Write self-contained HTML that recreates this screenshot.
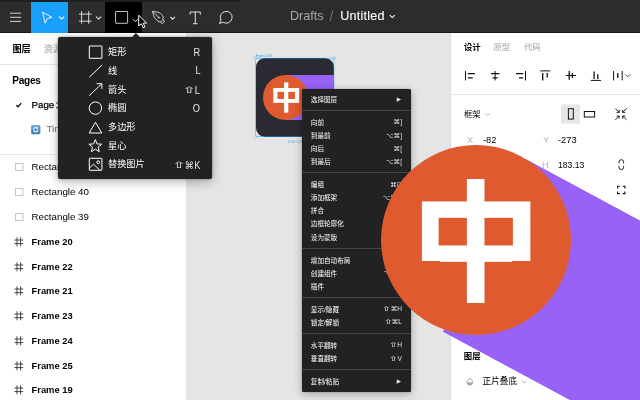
<!DOCTYPE html>
<html lang="zh-CN">
<head>
<meta charset="utf-8">
<title>Figma CN</title>
<style>
*{box-sizing:border-box;margin:0;padding:0}
html,body{width:640px;height:400px;overflow:hidden;background:#e5e5e5}
body{position:relative;font-family:"Liberation Sans","Noto Sans CJK SC",sans-serif;color:#000;-webkit-font-smoothing:antialiased}
.abs{position:absolute}
.t{position:absolute;white-space:nowrap;line-height:1}
/* toolbar */
#toolbar{left:0;top:0;width:640px;height:32.6px;background:#2c2c2c;border-bottom:1px solid #171717}
#topstrip{left:0;top:0;width:240px;height:1.6px;background:#1f1f1f}
#btn-move{left:31px;top:1.6px;width:37px;height:31px;background:#18a0fb}
#btn-rect{left:105.3px;top:1.6px;width:37px;height:31px;background:#000}
/* panels */
#left{left:0;top:32.6px;width:186px;height:367.4px;background:#fff}
#right{left:450px;top:32.6px;width:190px;height:367.4px;background:#fff;border-left:1px solid #dcdcdc}
.hline{position:absolute;height:1px;background:#e5e5e5}
.cjk{font-family:"Liberation Sans","Noto Sans CJK SC",sans-serif}
.b{font-weight:bold}
.grey{color:#b3b3b3}
/* layer rows */
.row{position:absolute;left:0;width:186px;height:24px}
.row .nm{position:absolute;left:31.5px;top:0;height:24px;line-height:24px;font-size:9.75px;white-space:nowrap}
.row.fr .nm{font-weight:bold;font-size:9.4px}
/* dropdown */
#dd{left:58px;top:37px;width:154px;height:142.3px;background:#222;border-radius:2px;box-shadow:0 3px 11px rgba(0,0,0,.28),0 0 3px rgba(0,0,0,.35)}
.ddi{position:absolute;left:0;width:154px;height:18.67px}
.ddi .lb{position:absolute;left:50px;top:0.8px;height:18.67px;line-height:18.67px;font-size:9.2px;color:#fff;white-space:nowrap}
.ddi .sc{position:absolute;right:11.8px;top:1.1px;height:18.67px;line-height:18.67px;font-size:10px;transform:scaleX(.92);transform-origin:100% 50%;letter-spacing:.45px;margin-right:-.45px;color:#e8e8e8;white-space:nowrap;font-family:"Liberation Sans","DejaVu Sans",sans-serif}
/* context menu */
#cm{left:302px;top:89px;width:109px;height:302.5px;background:#222;border-radius:1.5px;box-shadow:0 2px 8px rgba(0,0,0,.30),0 0 1px rgba(0,0,0,.6)}
.cmi{position:absolute;left:0;width:109px;height:13.1px}
.cmi .lb{position:absolute;left:8.8px;top:0;height:13.1px;line-height:13.1px;font-size:6.6px;color:#fff;white-space:nowrap}
.cmi .sc{position:absolute;right:9px;top:-0.4px;height:13.1px;line-height:13.1px;font-size:6.6px;color:#e0e0e0;white-space:nowrap;font-family:"Liberation Sans","DejaVu Sans",sans-serif}
.sh{display:inline-block;font-size:1.1em;transform:scale(1.7,0.8);margin:0 1.1px 0 2.5px}
.cmi .sh{font-size:1.2em;transform:scale(1.45,0.8);margin:0 0.6px 0 1.2px}
.num{height:13px;line-height:13px;font-size:9.8px;transform:scaleX(.95);transform-origin:0 50%}
.cms{position:absolute;left:0;width:109px;height:1px;background:#444}
</style>
</head>
<body>
<div id="wrap" style="position:absolute;left:0;top:0;width:640px;height:400px;will-change:transform">
<!-- TOOLBAR -->
<div id="toolbar" class="abs"></div>
<div id="topstrip" class="abs"></div>
<div id="btn-move" class="abs"></div>
<div id="btn-rect" class="abs"></div>
<svg class="abs" style="left:0;top:0" width="640" height="33" viewBox="0 0 640 33" fill="none" stroke="#fff" stroke-width="1">
  <!-- hamburger -->
  <path d="M10 13.2H21M10 17.3H21M10 21.4H21" stroke="#d4d4d4" stroke-width="1"/>
  <!-- move arrow -->
  <path d="M42.6 12.1L52 17.4L47.2 18.6L45.2 23.2Z" stroke-linejoin="round" stroke-width="0.9"/>
  <path d="M59 16.6L61.6 19.1L64.2 16.6" stroke-width="1.1"/>
  <!-- frame -->
  <path d="M81.6 11.1V23.8M88.7 11.1V23.8M79 14.1H91.5M79 21.2H91.5" stroke="#e0e0e0" stroke-width="0.95"/>
  <path d="M96 16.6L98.6 19.1L101.2 16.6" stroke="#e6e6e6" stroke-width="1.1"/>
  <!-- rectangle -->
  <rect x="115.6" y="11.5" width="12" height="11.8" rx="0.4" stroke="#d8d8d8" stroke-width="0.9"/>
  <path d="M133.1 19.3L135.4 21.7L137.7 19.3" stroke="#e6e6e6" stroke-width="1"/>
  <!-- pen -->
  <path d="M152.7 11.4C157.4 11.6 161.9 13 163.2 17L162.9 19.7L160.5 22.2C156.6 21.1 153.2 17.4 152.7 11.4ZM162.9 19.7L164.7 21.4L162.3 23.6L160.5 22.2M152.7 11.4L158.2 17" stroke="#e0e0e0" stroke-linejoin="round" stroke-width="0.9"/>
  <circle cx="158.9" cy="17.6" r="0.9" fill="#e0e0e0" stroke="none"/>
  <path d="M170.3 16.8L172.6 19.1L174.9 16.8" stroke="#e6e6e6" stroke-width="1.1"/>
  <!-- text T -->
  <path d="M190.2 14.6V12H200.3V14.6M195.25 12V23.7M193 23.7H197.5" stroke="#e6e6e6"/>
  <!-- comment -->
  <path d="M219.4 23.4L221 20A5.9 5.9 0 1 1 223.3 22.4Z" stroke="#e0e0e0" stroke-linejoin="round"/>
  <!-- title chevron -->
  <path d="M389.8 15.2L392.3 17.6L394.8 15.2" stroke="#fff" stroke-width="1.1"/>
  <!-- mouse cursor -->
  <path d="M138.7 15.2V26L141.3 23.7L143.1 27.7L144.9 26.9L143.1 23.1H146.6Z" fill="#000" stroke="#fff" stroke-width="1" stroke-linejoin="round"/>
</svg>
<div class="t" style="left:290px;top:9px;font-size:12.6px;line-height:14px;color:#a6a6a6">Drafts</div>
<div class="t" style="left:329.5px;top:8px;font-size:14px;line-height:16px;color:#6e6e6e">/</div>
<div class="t" style="left:340.3px;top:9px;font-size:12.6px;line-height:14px;color:#fff;letter-spacing:0.2px;-webkit-text-stroke:0.08px #fff">Untitled</div>

<!-- LEFT PANEL -->
<div id="left" class="abs"></div>
<div class="t b" style="left:12.4px;top:42.6px;height:13px;line-height:13px;font-size:9.2px">图层</div>
<div class="t grey" style="left:43.7px;top:42.6px;height:13px;line-height:13px;font-size:9.2px;font-weight:500">资源</div>
<div class="hline" style="left:0;top:64px;width:186px"></div>
<div class="t b" style="left:12.3px;top:74.1px;height:14px;line-height:14px;font-size:10.1px;letter-spacing:-0.3px">Pages</div>
<svg class="abs" style="left:14px;top:100px" width="12" height="10" viewBox="0 0 12 10" fill="none"><path d="M2.4 5.3L4 6.8L7.2 3.2" stroke="#000" stroke-width="1.25"/></svg>
<div class="t" style="left:31.5px;top:98px;height:14px;line-height:14px;font-size:9.75px;word-spacing:-1.3px;-webkit-text-stroke:0.25px #000">Page 1</div>
<svg class="abs" style="left:31px;top:125px" width="10" height="10" viewBox="0 0 10 10" fill="none">
  <defs><linearGradient id="tg" x1="0" y1="0" x2="0" y2="1"><stop offset="0" stop-color="#72ace0"/><stop offset="1" stop-color="#3f78b6"/></linearGradient></defs>
  <rect x="0.3" y="0.3" width="8.8" height="8.8" rx="1.5" fill="url(#tg)" stroke="#4a7db4" stroke-width="0.5"/>
  <path d="M2.5 4.2A2.3 2.3 0 0 1 6.7 3.6M6.9 5.2A2.3 2.3 0 0 1 2.7 5.8" stroke="#fff" stroke-width="1.1"/>
  <path d="M6 2.6L7.3 3.9L5.6 4.3ZM3.4 6.8L2.1 5.5L3.8 5.1Z" fill="#fff"/>
</svg>
<div class="t" style="left:46.4px;top:122.2px;height:14px;line-height:14px;font-size:9.9px;color:#707070">Timeline</div>
<div class="hline" style="left:0;top:154px;width:186px"></div>
<!-- layer rows: pitch 24.78 -->
<div class="row" style="top:155.3px"><svg class="abs" style="left:14.5px;top:7.8px" width="9" height="9" fill="none"><rect x=".5" y=".5" width="7.4" height="7" stroke="#c4c4c4"/></svg><span class="nm">Rectangle 41</span></div>
<div class="row" style="top:180.1px"><svg class="abs" style="left:14.5px;top:7.8px" width="9" height="9" fill="none"><rect x=".5" y=".5" width="7.4" height="7" stroke="#c4c4c4"/></svg><span class="nm">Rectangle 40</span></div>
<div class="row" style="top:204.9px"><svg class="abs" style="left:14.5px;top:7.8px" width="9" height="9" fill="none"><rect x=".5" y=".5" width="7.4" height="7" stroke="#c4c4c4"/></svg><span class="nm">Rectangle 39</span></div>
<div class="row fr" style="top:229.7px"><svg class="abs" style="left:14px;top:7.1px" width="10" height="10" fill="none" stroke="#333" stroke-width="0.9"><path d="M3 .3V9.3M6.6 .3V9.3M.4 3H9.2M.4 6.6H9.2"/></svg><span class="nm">Frame 20</span></div>
<div class="row fr" style="top:254.5px"><svg class="abs" style="left:14px;top:7.1px" width="10" height="10" fill="none" stroke="#333" stroke-width="0.9"><path d="M3 .3V9.3M6.6 .3V9.3M.4 3H9.2M.4 6.6H9.2"/></svg><span class="nm">Frame 22</span></div>
<div class="row fr" style="top:279.3px"><svg class="abs" style="left:14px;top:7.1px" width="10" height="10" fill="none" stroke="#333" stroke-width="0.9"><path d="M3 .3V9.3M6.6 .3V9.3M.4 3H9.2M.4 6.6H9.2"/></svg><span class="nm">Frame 21</span></div>
<div class="row fr" style="top:304.0px"><svg class="abs" style="left:14px;top:7.1px" width="10" height="10" fill="none" stroke="#333" stroke-width="0.9"><path d="M3 .3V9.3M6.6 .3V9.3M.4 3H9.2M.4 6.6H9.2"/></svg><span class="nm">Frame 23</span></div>
<div class="row fr" style="top:328.8px"><svg class="abs" style="left:14px;top:7.1px" width="10" height="10" fill="none" stroke="#333" stroke-width="0.9"><path d="M3 .3V9.3M6.6 .3V9.3M.4 3H9.2M.4 6.6H9.2"/></svg><span class="nm">Frame 24</span></div>
<div class="row fr" style="top:353.6px"><svg class="abs" style="left:14px;top:7.1px" width="10" height="10" fill="none" stroke="#333" stroke-width="0.9"><path d="M3 .3V9.3M6.6 .3V9.3M.4 3H9.2M.4 6.6H9.2"/></svg><span class="nm">Frame 25</span></div>
<div class="row fr" style="top:378.4px"><svg class="abs" style="left:14px;top:7.1px" width="10" height="10" fill="none" stroke="#333" stroke-width="0.9"><path d="M3 .3V9.3M6.6 .3V9.3M.4 3H9.2M.4 6.6H9.2"/></svg><span class="nm">Frame 19</span></div>

<!-- CANVAS: small icon -->
<div class="abs" id="sicon" style="left:255.5px;top:58px;width:78.5px;height:78.5px;border-radius:9px;background:#2a2a33;overflow:hidden">
  <div class="abs" style="left:30px;top:16.7px;width:50px;height:45.2px;background:#9762f5"></div>
  <div class="abs" style="left:7.5px;top:16.7px;width:45.2px;height:45.2px;border-radius:50%;background:#e05a30"></div>
  <div class="t" id="szh" style="left:8px;top:15.4px;width:45.2px;height:45.2px;line-height:45.2px;text-align:center;color:#fff;font-family:'Noto Sans CJK SC',sans-serif;font-weight:700;font-size:30.9px;-webkit-text-stroke:0.24px #fff">中</div>
  <div class="abs" style="left:16px;top:45.4px;width:6px;height:2.4px;background:#e05a30"></div>
  <div class="abs" style="left:38.5px;top:45.4px;width:6px;height:2.4px;background:#e05a30"></div>
</div>
<svg class="abs" style="left:250px;top:50px" width="92" height="96" viewBox="250 50 92 96" fill="none">
  <rect x="255.7" y="58.2" width="78.2" height="78.2" stroke="#18a0fb" stroke-width="0.6" opacity="0.8"/>
  <rect x="254.4" y="56.9" width="2.2" height="2.2" rx="0.9" fill="#fff" stroke="#3aa5f5" stroke-width="0.6"/>
  <rect x="333.1" y="56.9" width="2.2" height="2.2" rx="0.9" fill="#fff" stroke="#3aa5f5" stroke-width="0.6"/>
  <rect x="254.4" y="135.5" width="2.2" height="2.2" rx="0.9" fill="#fff" stroke="#3aa5f5" stroke-width="0.6"/>
  <rect x="333.1" y="135.5" width="2.2" height="2.2" rx="0.9" fill="#fff" stroke="#3aa5f5" stroke-width="0.6"/>
  <text x="255.7" y="57" fill="#4aa8f0" style="font-family:'Liberation Sans',sans-serif;font-size:3.9px">FigmaCN</text>
  <text x="287.6" y="143.4" fill="#4aa8f0" style="font-family:'Liberation Sans',sans-serif;font-size:3.9px">128×128</text>
</svg>

<!-- RIGHT PANEL -->
<div id="right" class="abs"></div>
<div class="t b" style="left:464px;top:40.8px;height:13px;line-height:13px;font-size:8.4px">设计</div>
<div class="t grey" style="left:493.4px;top:40.8px;height:13px;line-height:13px;font-size:8.4px;font-weight:500">原型</div>
<div class="t grey" style="left:524px;top:40.8px;height:13px;line-height:13px;font-size:8.4px;font-weight:500">代码</div>
<svg class="abs" style="left:451px;top:33px" width="189" height="367" viewBox="451 33 189 367" fill="none" stroke="#111" stroke-width="1">
  <!-- align left -->
  <path d="M465.5 71V80.4"/><path d="M467.8 73.6H474.9M467.8 77.9H472.8" stroke-width="1.3"/>
  <!-- align h center -->
  <path d="M495.1 71V80.4"/><path d="M491 73.6H499.4M492.6 77.9H497.6" stroke-width="1.3"/>
  <!-- align right -->
  <path d="M525.5 71V80.4"/><path d="M516 73.6H523.2M519 77.9H523.2" stroke-width="1.3"/>
  <!-- align top -->
  <path d="M540.2 70.9H550.2"/><path d="M542.7 73V80.4M547.2 73V77.6" stroke-width="1.3"/>
  <!-- align v center -->
  <path d="M565.8 75.5H576"/><path d="M569.2 71.1V79.8M572.4 73V78" stroke-width="1.3"/>
  <!-- align bottom -->
  <path d="M590.8 80.4H601"/><path d="M594.1 71.4V79M597.8 74.3V79" stroke-width="1.3"/>
  <!-- distribute -->
  <path d="M613.6 71V80.4M622.2 71V80.4"/><path d="M617.8 73V78" stroke-width="1.3"/>
  <path d="M625.2 74.4L627.6 76.8L630 74.4" stroke="#333" stroke-width="0.9"/>
  <!-- frame chevron -->
  <path d="M485.4 113.2L487.8 115.6L490.2 113.2" stroke="#a0a0a0" stroke-width="0.8"/>
  <!-- portrait / landscape -->
  <rect x="561" y="104.4" width="18.8" height="19.2" fill="#e6e6e6" stroke="none"/>
  <rect x="568.4" y="108.7" width="4.9" height="10.4"/>
  <rect x="584.3" y="111.5" width="10.3" height="5.5"/>
  <!-- collapse -->
  <path d="M615.3 108.5L619.2 112.4M619.2 109.8V112.4H616.6M626.6 108.5L622.7 112.4M622.7 109.8V112.4H625.3M615.3 119.9L619.2 116M619.2 118.6V116H616.6M626.6 119.9L622.7 116M622.7 118.6V116H625.3" stroke-width="0.9"/>
  <!-- link -->
  <path d="M619 163.4V162A2.3 2.3 0 0 1 623.6 162V163.4M619 165.9V167.3A2.3 2.3 0 0 0 623.6 167.3V165.9" stroke-width="0.9"/>
  <!-- corners -->
  <path d="M617.6 188.4V186.2H619.8M622.7 186.2H624.9V188.4M624.9 191.4V193.6H622.7M619.8 193.6H617.6V191.4" stroke-width="1.1"/>
  <!-- blend icon -->
  <path d="M469.8 378.1C468.2 379.8 467 381 467 382.3A2.8 2.8 0 0 0 472.6 382.3C472.6 381 471.4 379.8 469.8 378.1Z" stroke="#8c8c8c" stroke-width="0.8"/>
  <path d="M467 382.2A2.8 2.8 0 0 0 472.6 382.2Z" fill="#a8a8a8" stroke="none"/>
  <path d="M521.9 380.7L524.2 382.8L526.5 380.7" stroke="#a0a0a0" stroke-width="0.8"/>
</svg>
<div class="hline" style="left:451px;top:94px;width:189px"></div>
<div class="t" style="left:464px;top:107.7px;height:13px;line-height:13px;font-size:8.4px">框架</div>
<div class="t grey num" style="left:466.6px;top:132.9px">X</div>
<div class="t num" style="left:482.6px;top:132.9px">-82</div>
<div class="t grey num" style="left:542.8px;top:132.9px">Y</div>
<div class="t num" style="left:558.3px;top:132.9px">-273</div>
<div class="t grey num" style="left:466px;top:158.4px">W</div>
<div class="t num" style="left:482.6px;top:158.4px;transform:scaleX(.875)">183.13</div>
<div class="t grey num" style="left:542.4px;top:158.4px">H</div>
<div class="t num" style="left:558.2px;top:158.4px;transform:scaleX(.875)">183.13</div>
<div class="t b" style="left:463.8px;top:349.8px;height:13px;line-height:13px;font-size:8.4px">图层</div>
<div class="t" style="left:482.6px;top:375px;height:13px;line-height:13px;font-size:8.6px">正片叠底</div>

<!-- DROPDOWN -->
<div id="dd" class="abs">
  <div class="ddi" style="top:5.7px"><span class="lb">矩形</span><span class="sc">R</span></div>
  <div class="ddi" style="top:24.4px"><span class="lb">线</span><span class="sc">L</span></div>
  <div class="ddi" style="top:43.1px"><span class="lb">箭头</span><span class="sc"><span class="sh">⇧</span>L</span></div>
  <div class="ddi" style="top:61.7px"><span class="lb">椭圆</span><span class="sc">O</span></div>
  <div class="ddi" style="top:80.4px"><span class="lb">多边形</span></div>
  <div class="ddi" style="top:99.1px"><span class="lb">星心</span></div>
  <div class="ddi" style="top:117.7px"><span class="lb">替换图片</span><span class="sc"><span class="sh">⇧</span>⌘K</span></div>
</div>
<svg class="abs" style="left:58px;top:32px" width="155" height="147" viewBox="58 32 155 147" fill="none" stroke="#fff" stroke-width="1">
  <path d="M131.9 37.2L135.9 33.1L139.9 37.2Z" fill="#222" stroke="none"/>
  <rect x="89.3" y="46" width="12.6" height="12.3" rx="0.2"/>
  <path d="M89.2 77.3L102 65"/>
  <path d="M89.2 95.6L101.8 83.8M96.6 83.7H101.9V89"/>
  <circle cx="95.4" cy="108.1" r="6.2"/>
  <path d="M95.5 122.3L101.8 133H89.2Z" stroke-linejoin="miter"/>
  <path d="M95.3 139.6L97 143.9L101.7 144.2L98.1 147.2L99.3 151.7L95.3 149.2L91.3 151.7L92.5 147.2L88.9 144.2L93.6 143.9Z" stroke-linejoin="miter"/>
  <rect x="89.3" y="158.3" width="12.6" height="12" rx="0.4"/>
  <path d="M89.5 168L93.4 164.2L100 170.2"/>
  <circle cx="98.2" cy="162.2" r="1.4"/>
</svg>

<!-- CONTEXT MENU -->
<div id="cm" class="abs">
  <div class="cmi" style="top:3.85px"><span class="lb">选择图层</span><span class="sc" style="right:10px;top:0.1px;font-size:5.6px">▶&#xFE0E;</span></div>
  <div class="cms" style="top:20.8px"></div>
  <div class="cmi" style="top:26.85px"><span class="lb">向前</span><span class="sc">⌘]</span></div>
  <div class="cmi" style="top:39.95px"><span class="lb">到最前</span><span class="sc">⌥⌘]</span></div>
  <div class="cmi" style="top:53.05px"><span class="lb">向后</span><span class="sc">⌘[</span></div>
  <div class="cmi" style="top:66.15px"><span class="lb">到最后</span><span class="sc">⌥⌘[</span></div>
  <div class="cms" style="top:83.3px"></div>
  <div class="cmi" style="top:89.15px"><span class="lb">编组</span><span class="sc">⌘G</span></div>
  <div class="cmi" style="top:102.25px"><span class="lb">添加框架</span><span class="sc">⌥⌘G</span></div>
  <div class="cmi" style="top:115.35px"><span class="lb">拼合</span><span class="sc">⌘E</span></div>
  <div class="cmi" style="top:128.45px"><span class="lb">边框轮廓化</span><span class="sc"><span class="sh">⇧</span>⌘O</span></div>
  <div class="cmi" style="top:141.55px"><span class="lb">设为蒙版</span><span class="sc">⌃⌘M</span></div>
  <div class="cms" style="top:158.75px"></div>
  <div class="cmi" style="top:164.55px"><span class="lb">增加自动布局</span><span class="sc"><span class="sh">⇧</span>A</span></div>
  <div class="cmi" style="top:177.65px"><span class="lb">创建组件</span><span class="sc">⌥⌘K</span></div>
  <div class="cmi" style="top:190.75px"><span class="lb">插件</span><span class="sc" style="right:10px;top:0.1px;font-size:5.6px">▶&#xFE0E;</span></div>
  <div class="cms" style="top:208.25px"></div>
  <div class="cmi" style="top:213.75px"><span class="lb">显示/隐藏</span><span class="sc"><span class="sh">⇧</span>⌘H</span></div>
  <div class="cmi" style="top:226.85px"><span class="lb">锁定/解锁</span><span class="sc"><span class="sh">⇧</span>⌘L</span></div>
  <div class="cms" style="top:243.9px"></div>
  <div class="cmi" style="top:249.85px"><span class="lb">水平翻转</span><span class="sc"><span class="sh">⇧</span>H</span></div>
  <div class="cmi" style="top:262.95px"><span class="lb">垂直翻转</span><span class="sc"><span class="sh">⇧</span>V</span></div>
  <div class="cms" style="top:280.1px"></div>
  <div class="cmi" style="top:285.95px"><span class="lb">复制/粘贴</span><span class="sc" style="right:10px;top:0.1px;font-size:5.6px">▶&#xFE0E;</span></div>
</div>

<!-- BIG LOGO OVERLAY -->
<div class="abs" id="band" style="left:476px;top:145.35px;width:420px;height:191.5px;background:#9762f5;transform-origin:0 50%;transform:rotate(28.3deg);clip-path:polygon(5px 0,100% 0,100% 100%,14px 100%)"></div>
<div class="abs" id="circ" style="left:381px;top:145px;width:190px;height:190px;border-radius:50%;background:#e05a30"></div>
<div class="t" id="bzh" style="left:376px;top:153px;width:200px;height:160px;line-height:160px;text-align:center;color:#fff;font-family:'Noto Sans CJK SC',sans-serif;font-weight:700;font-size:130px;-webkit-text-stroke:1px #fff">中</div>
<div class="abs" style="left:420px;top:261px;width:20px;height:10px;background:#e05a30"></div>
<div class="abs" style="left:512px;top:261px;width:20px;height:10px;background:#e05a30"></div>

</div>
</body>
</html>
